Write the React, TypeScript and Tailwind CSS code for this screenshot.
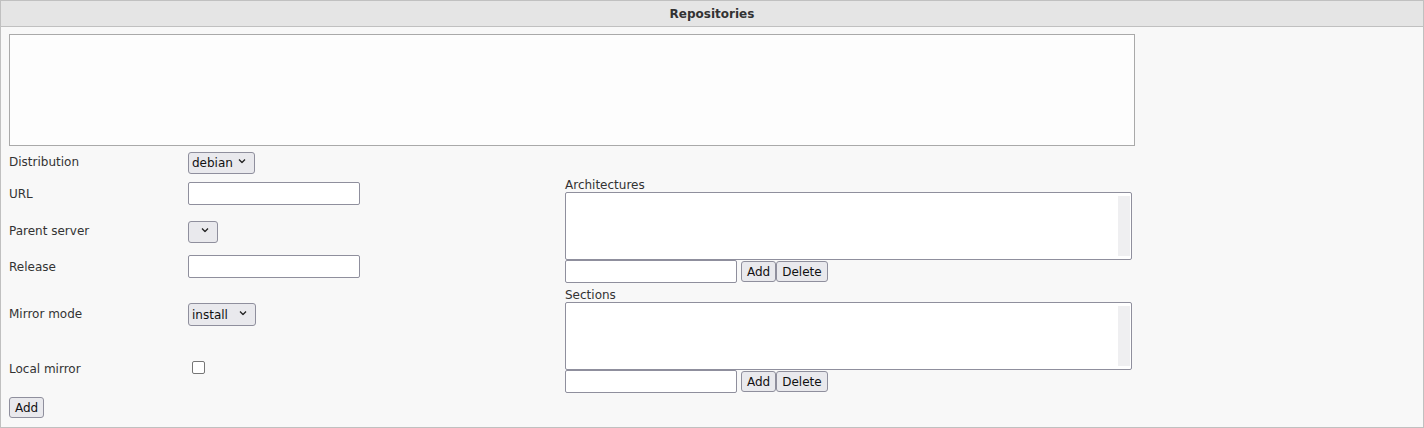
import * as React from "react";

const font = "font-['DejaVu_Sans',sans-serif]";

function Chevron() {
  return (
    <svg width="8" height="5" viewBox="0 0 8 5" className="pointer-events-none absolute right-[9px] top-1/2 -translate-y-1/2">
      <path d="M1 1l3 3 3-3" fill="none" stroke="#222" strokeWidth="1.3" />
    </svg>
  );
}

function Select({ value, width, height = 22 }: { value: string; width: number; height?: number }) {
  return (
    <div className="relative inline-block" style={{ width, height }}>
      <select
        defaultValue={value}
        className="h-full w-full appearance-none rounded-[3px] border border-[#8f8f9d] bg-[#e9e9ed] pl-[3px] text-[12px] text-[#111] outline-none"
      >
        <option value={value}>{value}</option>
      </select>
      <Chevron />
    </div>
  );
}

function TextInput({ width = 172 }: { width?: number }) {
  return (
    <input
      type="text"
      className="h-[23px] rounded-[2px] border border-[#8f8f9d] bg-white px-[2px] text-[12px] outline-none"
      style={{ width }}
    />
  );
}

function Btn({ children }: { children: React.ReactNode }) {
  return (
    <button className="h-[21px] rounded-[3px] border border-[#8f8f9d] bg-[#e9e9ed] px-[5px] text-[12px] leading-none text-[#111]">
      {children}
    </button>
  );
}

function ListEditor({ label }: { label: string }) {
  return (
    <div className="flex flex-col">
      <div className="h-[15px] pt-px text-[12px] leading-[15px] text-[#333]">{label}</div>
      <div className="flex h-[68px] w-[567px] rounded-[2px] border border-[#8f8f9d] bg-white p-[3px] pr-[1px]">
        <div className="flex-1" />
        <div className="w-[12px] bg-[#efeff1]" />
      </div>
      <div className="flex h-[23px] items-center">
        <TextInput />
        <div className="ml-[4px] flex items-center">
          <Btn>Add</Btn>
          <Btn>Delete</Btn>
        </div>
      </div>
    </div>
  );
}

function Row({ label, h, children }: { label: string; h: number; children: React.ReactNode }) {
  return (
    <div className="flex items-center" style={{ height: h }}>
      <div className="w-[179px] pt-[2px] text-[12px] text-[#333]">{label}</div>
      {children}
    </div>
  );
}

export default function App() {
  return (
    <div className={`${font} h-[428px] w-[1424px] overflow-hidden bg-white`}>
      <div className="h-[428px] w-[1424px] border border-[#c0c0c0] bg-[#f8f8f8]">
        <div className="flex h-[26px] items-center justify-center border-b border-[#c0c0c0] bg-[#e5e5e5] text-[12px] font-bold text-[#333]">
          Repositories
        </div>
        <div className="px-2 pt-[7px]">
          <div className="h-[112px] w-[1126px] border border-[#a9a9a9] bg-[#fdfdfd]" />
          <div className="flex">
            <div className="w-[556px]">
              <Row label="Distribution" h={30}>
                <Select value="debian" width={67} />
              </Row>
              <Row label="URL" h={34}>
                <TextInput />
              </Row>
              <Row label="Parent server" h={40}>
                <Select value="" width={30} />
              </Row>
              <Row label="Release" h={32}>
                <TextInput />
              </Row>
              <Row label="Mirror mode" h={62}>
                <Select value="install" width={68} height={23} />
              </Row>
              <Row label="Local mirror" h={47}>
                <input
                  type="checkbox"
                  className="ml-[4px] h-[13px] w-[13px] appearance-none rounded-[2px] border border-[#767676] bg-white"
                />
              </Row>
              <div className="mt-[6px] flex">
                <Btn>Add</Btn>
              </div>
            </div>
            <div className="flex flex-col pt-[31px]">
              <ListEditor label="Architectures" />
              <div className="h-[4px]" />
              <ListEditor label="Sections" />
            </div>
          </div>
        </div>
      </div>
    </div>
  );
}
